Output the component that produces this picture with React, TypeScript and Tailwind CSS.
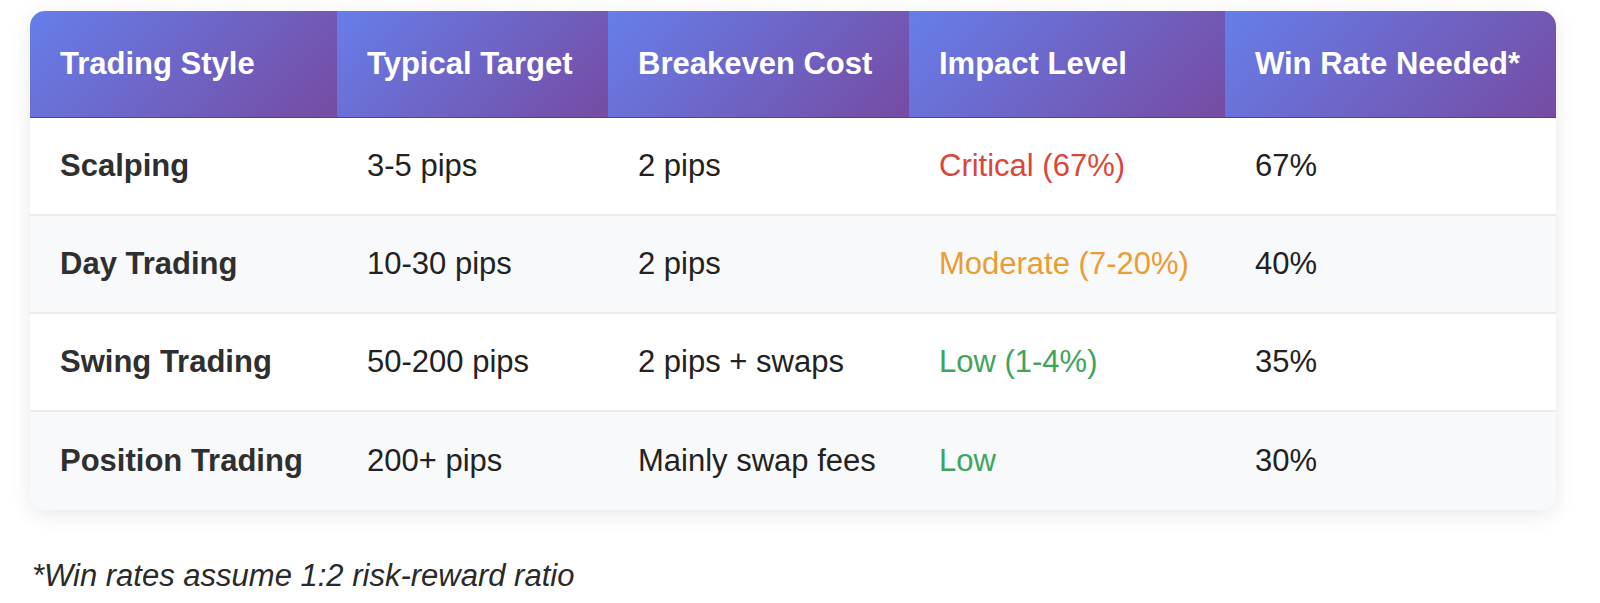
import React from "react";

type Row = {
  style: string;
  target: string;
  cost: string;
  impact: string;
  impactColor: string;
  win: string;
};

const rows: Row[] = [
  { style: "Scalping", target: "3-5 pips", cost: "2 pips", impact: "Critical (67%)", impactColor: "text-[#d9463a]", win: "67%" },
  { style: "Day Trading", target: "10-30 pips", cost: "2 pips", impact: "Moderate (7-20%)", impactColor: "text-[#eb9c32]", win: "40%" },
  { style: "Swing Trading", target: "50-200 pips", cost: "2 pips + swaps", impact: "Low (1-4%)", impactColor: "text-[#3fa55d]", win: "35%" },
  { style: "Position Trading", target: "200+ pips", cost: "Mainly swap fees", impact: "Low", impactColor: "text-[#3fa55d]", win: "30%" },
];

const headers = ["Trading Style", "Typical Target", "Breakeven Cost", "Impact Level", "Win Rate Needed*"];

export default function App() {
  return (
    <div
      className="min-h-[603px] w-[1600px] bg-white pt-[11px]"
      style={{ fontFamily: '"Liberation Sans", Arial, Helvetica, sans-serif' }}
    >
      <div className="ml-[30px] w-[1526px] overflow-hidden rounded-[15px] bg-white shadow-[0_5px_22px_rgba(0,0,0,0.09)]">
        <div className="grid grid-cols-[307px_271px_301px_316px_331px] border-b border-[#6a2fa3]">
          {headers.map((h) => (
            <div
              key={h}
              className="flex h-[106px] items-center bg-[linear-gradient(135deg,#667eea_0%,#764ba2_100%)] pl-[30px] text-[31px] font-bold text-white"
            >
              {h}
            </div>
          ))}
        </div>
        {rows.map((r, i) => (
          <div
            key={r.style}
            className={`grid h-[98px] grid-cols-[307px_271px_301px_316px_331px] items-center text-[31px] ${
              i % 2 === 1 ? "bg-[#f8f9fa]" : "bg-white"
            } ${i < rows.length - 1 ? "border-b-2 border-[#ebecee]" : ""}`}
          >
            <div className="pl-[30px] font-bold text-[#2f2f2f]">{r.style}</div>
            <div className="pl-[30px] text-[#222]">{r.target}</div>
            <div className="pl-[30px] text-[#222]">{r.cost}</div>
            <div className={`pl-[30px] ${r.impactColor}`}>{r.impact}</div>
            <div className="pl-[30px] text-[#222]">{r.win}</div>
          </div>
        ))}
      </div>
      <p className="ml-[32px] mt-[43px] text-[31px] italic leading-[46px] text-[#2a2a2a]">
        *Win rates assume 1:2 risk-reward ratio
      </p>
    </div>
  );
}
